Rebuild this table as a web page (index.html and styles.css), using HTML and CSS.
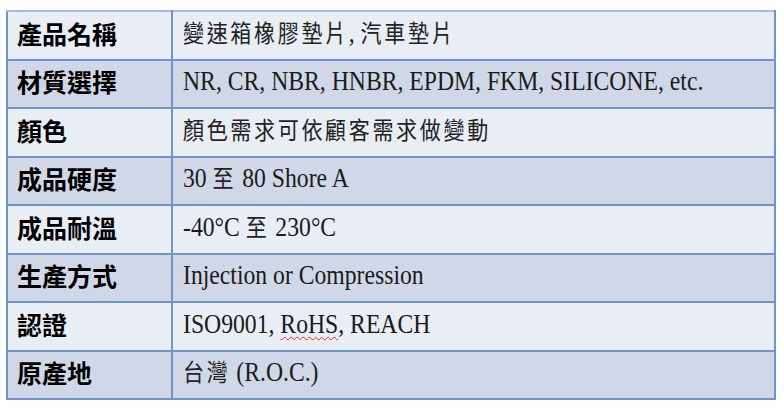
FILE: index.html
```html
<!DOCTYPE html>
<html lang="zh-Hant">
<head>
<meta charset="utf-8">
<link rel="stylesheet" href="styles.css">
</head>
<body>
<table class="spec">
  <tr class="odd"><th>產品名稱</th><td><span class="v"><span class="k">變速箱橡膠墊片</span>, <span class="k">汽車墊片</span></span></td></tr>
  <tr class="even"><th>材質選擇</th><td><span class="v">NR, CR, NBR, HNBR, EPDM, FKM, SILICONE, etc.</span></td></tr>
  <tr class="odd"><th>顏色</th><td><span class="v"><span class="k">顏色需求可依顧客需求做變動</span></span></td></tr>
  <tr class="even"><th>成品硬度</th><td><span class="v">30 <span class="k">至</span> 80 Shore A</span></td></tr>
  <tr class="odd"><th>成品耐溫</th><td><span class="v">-40°C <span class="k">至</span> 230°C</span></td></tr>
  <tr class="even"><th>生產方式</th><td><span class="v">Injection or Compression</span></td></tr>
  <tr class="odd"><th>認證</th><td><span class="v">ISO9001, <span class="spell">RoHS</span>, REACH</span></td></tr>
  <tr class="even"><th>原產地</th><td><span class="v"><span class="k">台灣</span> (R.O.C.)</span></td></tr>
</table>
</body>
</html>
```
FILE: styles.css
```css
html, body {
  margin: 0;
  padding: 0;
  background: #ffffff;
}
body {
  padding: 10px 0 0 6px;
}
.spec {
  border-collapse: collapse;
  width: 770px;
  table-layout: fixed;
  font-family: "Liberation Serif", "Noto Sans CJK TC", serif;
  color: #111;
}
.spec th, .spec td {
  height: 42.5px;
  padding: 0 0 4px 10px;
  border: 2px solid #6f94cb;
  text-align: left;
  vertical-align: middle;
  line-height: 1;
  white-space: nowrap;
}
.spec tr:first-child th, .spec tr:first-child td {
  border-top-color: #a8bee0;
}
.spec th {
  width: 154px;
  padding-left: 9px;
  font-family: "Noto Sans CJK TC", sans-serif;
  font-weight: 700;
  font-size: 25px;
  color: #000;
}
.v {
  display: inline-block;
  font-size: 27px;
  color: #1a1a1a;
  transform: scaleX(0.877);
  transform-origin: left center;
}
.k {
  font-family: "Noto Sans CJK TC", sans-serif;
  font-size: 24px;
  letter-spacing: 3px;
  color: #222;
}
.odd { background: #e9edf4; }
.even { background: #d0d8e8; }
.spell {
  text-decoration: underline wavy #e03030;
  text-decoration-thickness: 1px;
  text-underline-offset: 3px;
}
```
